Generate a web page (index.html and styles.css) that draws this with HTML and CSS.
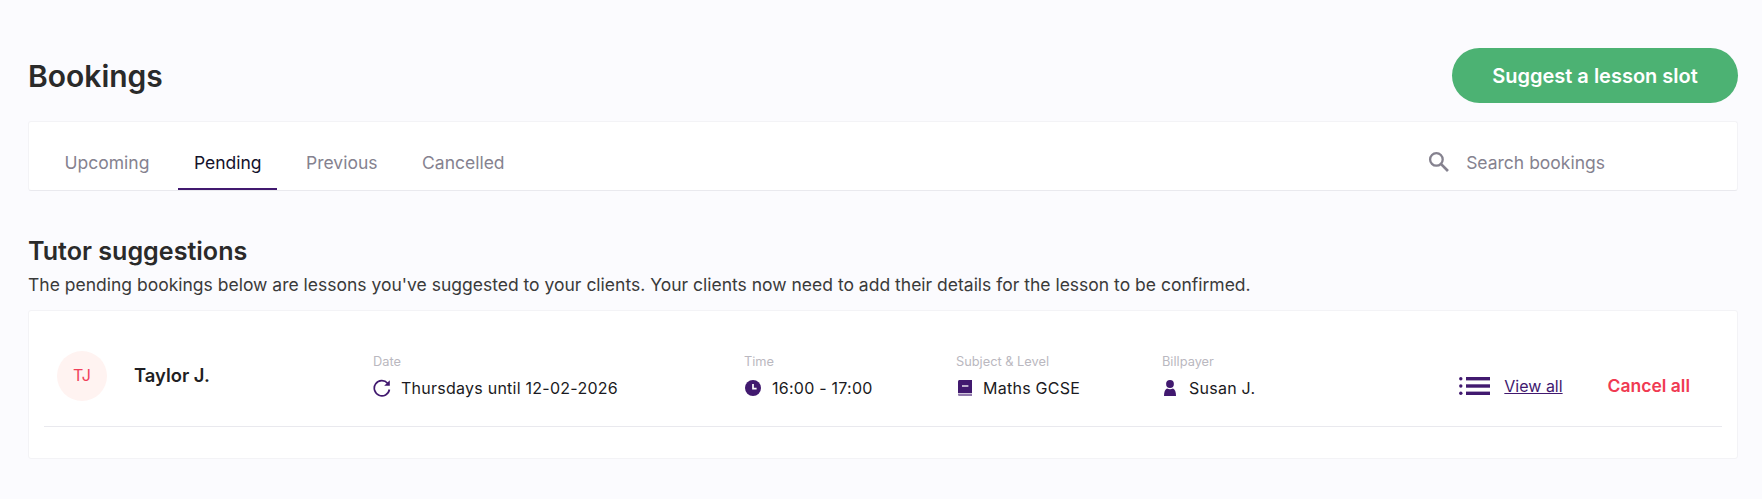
FILE: index.html
```html
<!DOCTYPE html>
<html lang="en">
<head>
<meta charset="utf-8">
<title>Bookings</title>
<link rel="stylesheet" href="styles.css">
</head>
<body>
<main class="page">
  <header class="page-head">
    <h1 class="title">Bookings</h1>
    <button class="cta" type="button">Suggest a lesson slot</button>
  </header>

  <nav class="panel tabs-bar">
    <ul class="tabs">
      <li class="tab">Upcoming</li>
      <li class="tab tab-active">Pending</li>
      <li class="tab">Previous</li>
      <li class="tab">Cancelled</li>
    </ul>
    <div class="search">
      <svg class="search-icon" viewBox="0 0 20 20" aria-hidden="true"><circle cx="8" cy="8" r="6" fill="none" stroke="currentColor" stroke-width="2.2"/><path d="M12.5 12.5 19 19" fill="none" stroke="currentColor" stroke-width="2.6"/></svg>
      <span class="search-text">Search bookings</span>
    </div>
  </nav>

  <section class="intro">
    <h2 class="subtitle">Tutor suggestions</h2>
    <p class="lead">The pending bookings below are lessons you've suggested to your clients. Your clients now need to add their details for the lesson to be confirmed.</p>
  </section>

  <section class="panel list-card">
    <div class="row">
      <div class="client">
        <span class="avatar">TJ</span>
        <span class="client-name">Taylor J.</span>
      </div>
      <div class="cell">
        <span class="label">Date</span>
        <span class="value">
          <svg class="ic ic-date" viewBox="0 0 18 18" aria-hidden="true"><path d="M14.6 4.2A7.6 7.6 0 1 0 16.4 10.5" fill="none" stroke="currentColor" stroke-width="1.7"/><path d="M16.8 1.2v5.6h-5.6z" fill="currentColor"/></svg>
          Thursdays until 12-02-2026
        </span>
      </div>
      <div class="cell">
        <span class="label">Time</span>
        <span class="value value-wide">
          <svg class="ic ic-time" viewBox="0 0 16 16" aria-hidden="true"><circle cx="8" cy="8" r="8" fill="currentColor"/><path d="M8 4v4.6h3.6" fill="none" stroke="#fff" stroke-width="1.7"/></svg>
          16:00 - 17:00
        </span>
      </div>
      <div class="cell">
        <span class="label">Subject &amp; Level</span>
        <span class="value value-wide">
          <svg class="ic ic-book" viewBox="0 0 14 16" aria-hidden="true"><path d="M1.6 0H14v13.2H0V1.6C0 .7.7 0 1.6 0z" fill="currentColor"/><path d="M0 14h14v2H1.6C.7 16 0 15.3 0 14.4z" fill="#8f78ab"/><path d="M4 6h6.4" stroke="#fff" stroke-width="1.3"/></svg>
          Maths GCSE
        </span>
      </div>
      <div class="cell">
        <span class="label">Billpayer</span>
        <span class="value value-wide">
          <svg class="ic ic-user" viewBox="0 0 12 16" aria-hidden="true"><circle cx="6" cy="4" r="3.9" fill="currentColor"/><path d="M3 8.6c1.6 1 4.4 1 6 0 2 .9 3 3.400 3 7.400H0c0-4 1-6.500 3-7.400z" fill="currentColor"/></svg>
          Susan J.
        </span>
      </div>
      <div class="actions">
        <svg class="ic-list" viewBox="0 0 31 18" aria-hidden="true"><g fill="currentColor"><circle cx="1.800" cy="1.800" r="1.700"/><circle cx="1.800" cy="9" r="1.700"/><circle cx="1.800" cy="16.200" r="1.700"/><rect x="7" y="0" width="24" height="3.400"/><rect x="7" y="7.300" width="24" height="3.400"/><rect x="7" y="14.600" width="24" height="3.400"/></g></svg>
        <a class="view-all" href="#">View all</a>
        <span class="cancel-all">Cancel all</span>
      </div>
    </div>
  </section>
</main>
</body>
</html>
```

FILE: styles.css
```css
* { box-sizing: border-box; }

html, body { margin: 0; padding: 0; }

body {
  background: #fbfbfe;
  color: #2a2a2a;
  font-family: Inter, "Liberation Sans", sans-serif;
  height: 499px;
  overflow: hidden;
}

.page { padding: 48px 24px 0 28px; }

.page-head {
  display: flex;
  justify-content: space-between;
  align-items: center;
  height: 55px;
}

.title {
  margin: 0;
  font-size: 30px;
  font-weight: 600;
  color: #2a2a2a;
}

.cta {
  width: 286px;
  height: 55px;
  border: 0;
  border-radius: 28px;
  background: #4cb273;
  color: #fff;
  font: 600 20px Inter, "Liberation Sans", sans-serif;
}

.panel {
  background: #fff;
  border: 1px solid #f3f3f6;
  border-radius: 3px;
}

.tabs-bar {
  display: flex;
  justify-content: space-between;
  margin-top: 18px;
  height: 70px;
  border-bottom: 1px solid #e9e9ee;
}

.tabs {
  display: flex;
  gap: 13.5px;
  list-style: none;
  margin: 0;
  padding: 0 0 0 20px;
}

.tab {
  padding: 0 15.5px;
  height: 68px;
  line-height: 81px;
  font-size: 17.5px;
  color: #85828f;
}

.tab-active {
  color: #14122b;
  border-bottom: 2px solid #41196f;
}

.search {
  display: flex;
  align-items: center;
  gap: 17px;
  padding: 13px 132px 0 0;
  color: #85828f;
  font-size: 17.5px;
}

.search-icon { width: 21px; height: 21px; margin-top: -2px; }

.intro { margin-top: 45px; }

.subtitle {
  margin: 0;
  font-size: 25.1px;
  font-weight: 600;
  line-height: 30px;
  color: #2a2a2a;
}

.lead {
  margin: 7px 0 0;
  font-size: 17.5px;
  line-height: 24px;
  color: #3a3a3a;
}

.list-card {
  margin-top: 13px;
  height: 149px;
  padding: 0 15px;
}

.row {
  display: grid;
  grid-template-columns: 329px 371px 212px 206px 1fr auto;
  height: 116px;
  border-bottom: 1px solid #e9e9ee;
}

.client {
  display: flex;
  align-items: center;
  gap: 27px;
  padding: 40px 0 0 13px;
  align-self: start;
}

.avatar {
  display: flex;
  align-items: center;
  justify-content: center;
  width: 50px;
  height: 50px;
  padding-bottom: 2px;
  border-radius: 50%;
  background: #fff3f1;
  color: #f0405a;
  font-size: 16px;
}

.client-name {
  margin-bottom: 2px;
  font-size: 18.4px;
  font-weight: 600;
  color: #1f1f24;
}

.cell {
  display: flex;
  flex-direction: column;
  padding-top: 43px;
}

.label {
  font-size: 12.8px;
  line-height: 16px;
  color: #bab8c0;
}

.value {
  display: flex;
  align-items: center;
  gap: 10px;
  margin-top: 6px;
  font-size: 16px;
  line-height: 24px;
  color: #1a1a22;
  letter-spacing: 0.25px;
}

.value-wide { gap: 11px; }

.ic { color: #41196f; flex: none; }
.ic-date { width: 18px; height: 18px; }
.ic-time { width: 16px; height: 16px; margin-left: 1px; }
.ic-book { width: 14px; height: 16px; margin-left: 2px; }
.ic-user { width: 12px; height: 16px; margin: 0 2px 0 2px; }

.actions {
  display: flex;
  align-items: center;
  align-self: start;
  padding: 64px 32px 0 0;
}

.ic-list { width: 31px; height: 18px; color: #41196f; margin-right: 14px; }

.view-all {
  font-size: 16px;
  color: #41196f;
  margin-right: 45px;
}

.cancel-all {
  font-size: 17.5px;
  font-weight: 600;
  color: #f03a52;
}
```
